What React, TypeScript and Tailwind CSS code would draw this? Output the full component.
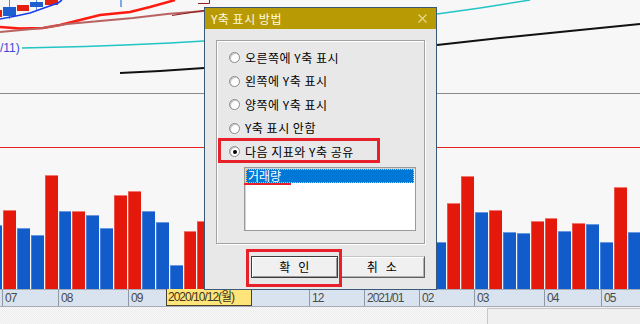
import React from "react";

const PITCH = 13.886;
type Bar = [number, number, "r" | "b"];
const bars: Bar[] = [
  [-1, 225, "b"], [0, 210, "r"], [1, 228, "b"], [2, 235, "b"], [3, 175, "r"], [4, 211, "b"],
  [5, 211, "r"], [6, 215, "b"], [7, 228, "b"], [8, 195, "r"], [9, 191, "r"], [10, 211, "b"],
  [11, 222, "b"], [12, 265, "b"], [13, 231, "r"], [14, 221, "r"],
  [31, 242, "b"], [32, 203, "r"], [33, 176, "r"], [34, 212, "b"], [35, 210, "r"], [36, 232, "b"],
  [37, 233, "b"], [38, 221, "r"], [39, 218, "r"], [40, 231, "b"], [41, 223, "r"], [42, 224, "b"],
  [43, 242, "b"], [44, 187, "r"], [45, 232, "b"],
];

const ticks: { x: number; t: string }[] = [
  { x: 2, t: "07" },
  { x: 58, t: "08" },
  { x: 128, t: "09" },
  { x: 309, t: "12" },
  { x: 364, t: "2021/01" },
  { x: 419, t: "02" },
  { x: 474, t: "03" },
  { x: 544, t: "04" },
  { x: 601, t: "05" },
];

function Chart() {
  return (
    <svg width="640" height="289" className="block">
      <rect x="0" y="0" width="640" height="289" fill="#f7f7f7" />
      <line x1="0" y1="93.5" x2="640" y2="93.5" stroke="#8a8a8a" strokeWidth="1" />
      <line x1="0" y1="147.5" x2="640" y2="147.5" stroke="#e82020" strokeWidth="1" />
      {bars.map(([k, top, c]) => {
        const x = Math.round(3 + PITCH * k);
        const nx = Math.round(3 + PITCH * (k + 1));
        const w = nx - x - 1;
        const main = c === "r" ? "#e5190b" : "#115bcb";
        const edge = c === "r" ? "#f07a72" : "#6a98e0";
        return (
          <g key={k}>
            <rect x={x} y={top} width={w} height={289 - top} fill={main} />
            <rect x={x} y={top} width={w} height={1} fill={edge} />
            <rect x={x} y={top} width={1} height={289 - top} fill={edge} opacity="0.6" />
          </g>
        );
      })}
      <rect x="0" y="10" width="2" height="7" fill="#e62010" />
      <line x1="9.5" y1="0" x2="9.5" y2="19" stroke="#5a8ee0" strokeWidth="1" />
      <rect x="3" y="7" width="13" height="9" fill="#1d5fd0" />
      <rect x="17" y="5" width="12" height="6" fill="#e62010" />
      <line x1="36.5" y1="0" x2="36.5" y2="10" stroke="#5a8ee0" strokeWidth="1" />
      <rect x="30" y="2" width="13" height="5" fill="#1d5fd0" />
      <rect x="45" y="0" width="13" height="5" fill="#e62010" />
      <line x1="121" y1="0" x2="121" y2="7" stroke="#80a8e8" strokeWidth="2" />
      <polyline points="0,19 16,16 30,13 44,8 58,3 62,0" fill="none" stroke="#1a3ee8" strokeWidth="1.6" />
      <polyline
        points="0,27 20,28.5 43,28 60,25 80,20 100,15 130,12 150,7 175,0"
        fill="none"
        stroke="#ff1a10"
        strokeWidth="2.4"
      />
      <polyline
        points="0,32 43,28 67,24 100,21 133,18 167,14 204,11"
        fill="none"
        stroke="#b86262"
        strokeWidth="2"
      />
      <polyline points="172,15.5 204,10.5" fill="none" stroke="#8e1a1a" strokeWidth="1" />
      <polyline points="198,3.5 209.5,3.5 209.5,0" fill="none" stroke="#9a1c1c" strokeWidth="1" />
      <polyline points="22,48 85,46.5 125,45 170,43 204,41" fill="none" stroke="#22c4c4" strokeWidth="1.4" />
      <polyline points="437,14 480,8 530,0" fill="none" stroke="#22c4c4" strokeWidth="1.4" />
      <text x="0" y="52" fontSize="12" fill="#3a48d8" fontFamily="Liberation Sans, sans-serif">
        /11)
      </text>
      <polyline points="120,73 160,71 204,68" fill="none" stroke="#111" strokeWidth="2" />
      <polyline points="437,45 500,38 560,32 640,24" fill="none" stroke="#111" strokeWidth="2" />
    </svg>
  );
}

function Radio({ checked, label }: { checked?: boolean; label: string }) {
  return (
    <div className="h-[23.5px] flex items-center">
      <div className="w-[11px] h-[11px] rounded-full bg-white border border-[#8a8a8a] shadow-[inset_1px_1px_0_#c4c4c4] flex items-center justify-center">
        {checked && <div className="w-[4px] h-[4px] rounded-full bg-black" />}
      </div>
      <span className="ml-[5px] text-[12px] leading-none tracking-[0.5px] text-black whitespace-pre">{label}</span>
    </div>
  );
}

export default function App() {
  return (
    <div className="relative w-[640px] h-[324px] overflow-hidden bg-[#f7f7f7] font-['Noto_Sans_CJK_KR',sans-serif] flex flex-col">
      <div className="h-[289px]">
        <Chart />
      </div>
      <div className="relative h-[18px] bg-[#d9e3f0] border-t border-b border-[#a4acb8] font-['Liberation_Sans','Noto_Sans_CJK_KR',sans-serif] text-[12px] tracking-[-1px] text-[#4a4a4a]">
        {ticks.map((t) => (
          <div
            key={t.x}
            className="absolute top-0 bottom-0 border-l border-[#9098a6] pl-[2px] flex items-center leading-none"
            style={{ left: t.x }}
          >
            {t.t}
          </div>
        ))}
        <div className="absolute left-[166px] top-[-1px] w-[86px] h-[17px] bg-[#ffe47a] border-l border-r border-b border-[#4a4030] flex items-center pl-[1px] leading-none text-[#3a3520]">
          2020/10/12(월)
        </div>
      </div>
      <div className="flex-1 flex bg-[repeating-conic-gradient(#ececec_0%_25%,#f9f9f9_0%_50%)] bg-[length:2px_2px]">
        <div className="ml-[487px] flex-1 bg-[#f0f0f0] border-t border-l border-[#c8c8c8] mt-[1px]" />
      </div>

      <div className="absolute left-[204px] top-[7px] w-[233px] h-[283px] border border-[#3a5878] bg-[#e8e8e8] flex flex-col">
        <div className="h-[21px] bg-[#b89a04] flex items-center justify-between pl-[6px] pr-[9px]">
          <span className="text-[12px] leading-none tracking-[0.5px] text-[#fffbe2]">Y축 표시 방법</span>
          <svg width="9" height="9" viewBox="0 0 9 9">
            <path d="M0.5 0.5 L8.5 8.5 M8.5 0.5 L0.5 8.5" stroke="#e6d88c" strokeWidth="1.2" />
          </svg>
        </div>
        <div className="flex flex-col pt-[11px] px-[11px]">
          <div className="w-[209px] h-[204px] border border-[#a2a2a2] shadow-[inset_1px_1px_0_#ffffff,1px_1px_0_#ffffff] pt-[5px] pl-[12px] flex flex-col">
            <Radio label="오른쪽에 Y축 표시" />
            <Radio label="왼쪽에 Y축 표시" />
            <Radio label="양쪽에 Y축 표시" />
            <Radio label="Y축 표시 안함" />
            <Radio checked label="다음 지표와 Y축 공유" />
            <div className="relative mt-[3px] ml-[15px] w-[172px] h-[64px] bg-white border border-[#9a9a9a] shadow-[inset_1px_1px_0_#d4d4d4] p-[1px]">
              <div className="h-[14px] bg-[#0078d7] border border-dotted border-[#f4c070] flex items-center text-[12px] leading-none text-white pl-[1px]">
                거래량
              </div>
              <div className="absolute left-[-1px] top-[15px] w-[47px] h-[2px] bg-[#e8202a]" />
            </div>
          </div>
          <div className="flex mt-[12px] pl-[35px] gap-[1px]">
            <div className="w-[87px] h-[22px] bg-[#f0f0f0] border border-[#3c3c3c] shadow-[inset_1px_1px_0_#ffffff,inset_-1px_-1px_0_#9a9a9a] flex items-center justify-center gap-[8px] text-[12px] leading-none text-black">
              <span>확</span>
              <span>인</span>
            </div>
            <div className="w-[87px] h-[22px] bg-[#f0f0f0] border border-[#c4c4c4] border-r-[#606060] border-b-[#606060] shadow-[inset_1px_1px_0_#ffffff,inset_-1px_-1px_0_#b0b0b0] flex items-center justify-center gap-[8px] text-[12px] leading-none text-black">
              <span>취</span>
              <span>소</span>
            </div>
          </div>
        </div>
        <div className="absolute left-[13px] top-[130px] w-[162px] h-[25px] border-[3px] border-[#e8202a]" />
        <div className="absolute left-[41px] top-[241px] w-[96px] h-[38px] border-[3px] border-[#e8202a]" />
      </div>
    </div>
  );
}
